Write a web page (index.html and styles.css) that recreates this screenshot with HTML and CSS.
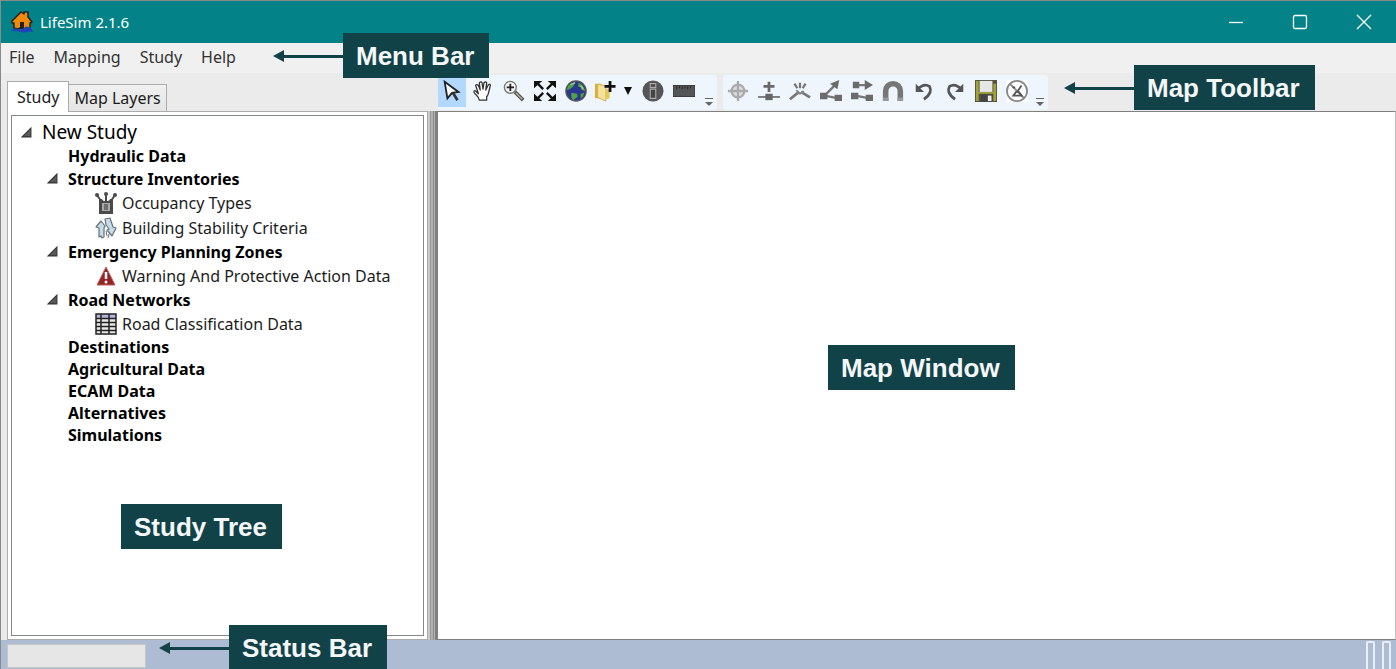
FILE: index.html
```html
<!DOCTYPE html>
<html lang="en">
<head>
<meta charset="utf-8">
<title>LifeSim 2.1.6</title>
<link rel="stylesheet" href="styles.css">
</head>
<body>
<div class="window">
  <header class="titlebar">
    <svg class="logo" viewBox="0 0 24 24"><path d="M2 11 11 2l3 2V2h4v5l4 5-2 1v6l-4-1-2 1-4-1-2 1-4-1v-5H2z" fill="#f08a0c" stroke="#222" stroke-width="1.500" stroke-linejoin="round"/><path d="M10 12h4v6h-4z" fill="#222"/><path d="M1 21q3-4 7-2t6-1 7 0l2 4q-4-1-6 0t-6 0-10-1z" fill="#1d45b8"/></svg>
    <h1 class="title">LifeSim 2.1.6</h1>
    <div class="captions">
      <button class="caption" aria-label="Minimize"><svg viewBox="0 0 16 16"><path d="M1 8.500h14"/></svg></button>
      <button class="caption" aria-label="Maximize"><svg viewBox="0 0 16 16"><rect x="1.500" y="1.500" width="13" height="13" rx="1.500"/></svg></button>
      <button class="caption" aria-label="Close"><svg viewBox="0 0 16 16"><path d="m1 1 14 14M15 1 1 15"/></svg></button>
    </div>
  </header>

  <nav class="menubar">
    <button class="menu">File</button>
    <button class="menu">Mapping</button>
    <button class="menu">Study</button>
    <button class="menu">Help</button>
  </nav>

  <main class="workspace">
    <section class="sidebar">
      <div class="tabs" role="tablist">
        <button class="tab tab-active" role="tab" aria-selected="true">Study</button>
        <button class="tab" role="tab" aria-selected="false">Map Layers</button>
      </div>
      <div class="tab-panel">
        <ul class="tree">
          <li>
            <div class="row row-root"><button class="toggle" aria-label="Collapse New Study"><svg viewBox="0 0 10 10"><path d="M9 1v8H1z"/></svg></button><span>New Study</span></div>
            <ul class="branch">
              <li class="row row-heading"><span class="toggle"></span><span>Hydraulic Data</span></li>
              <li>
                <div class="row row-group"><button class="toggle" aria-label="Collapse Structure Inventories"><svg viewBox="0 0 10 10"><path d="M9 1v8H1z"/></svg></button><span>Structure Inventories</span></div>
                <ul class="leaves">
                  <li class="row row-leaf"><svg class="leaf-icon" viewBox="0 0 22 22"><g stroke="#4a4a4a" stroke-width="2" fill="none"><path d="m2 3 4 6 3 1M20 3l-4 6-3 1M11 2v8"/></g><g fill="#4a4a4a"><circle cx="2" cy="3" r="2"/><circle cx="11" cy="2" r="2"/><circle cx="20" cy="3" r="2"/><path d="M4 7h3l1 2h6l1-2h3v15H4z"/></g><path d="M7 11h8v8H7z" fill="#aaa"/><path d="M9 13h4M9 15h4M9 17h4" stroke="#333"/></svg><span>Occupancy Types</span></li>
                  <li class="row row-leaf"><svg class="leaf-icon" viewBox="0 0 22 22"><g fill="#c4dce6" stroke="#687078" stroke-width="1.200" stroke-linejoin="round"><path d="m1 10 5-6 4 5-1 2v9l-2 1-1-2-2 1V11z"/><path d="m10 2 5-1 3 9 3 1-4 8-5-6 2-1-3-4z"/></g><path d="m11 14 1 5m2-2-1 4" stroke="#687078" fill="none"/></svg><span>Building Stability Criteria</span></li>
                </ul>
              </li>
              <li>
                <div class="row row-group"><button class="toggle" aria-label="Collapse Emergency Planning Zones"><svg viewBox="0 0 10 10"><path d="M9 1v8H1z"/></svg></button><span>Emergency Planning Zones</span></div>
                <ul class="leaves">
                  <li class="row row-leaf"><svg class="leaf-icon" viewBox="0 0 22 22"><path d="m11 2 9 18H2z" fill="#962424" stroke="#b86060" stroke-linejoin="round"/><path d="M11 7v7" stroke="#fff" stroke-width="2.500"/><circle cx="11" cy="17" r="1.500" fill="#fff"/></svg><span>Warning And Protective Action Data</span></li>
                </ul>
              </li>
              <li>
                <div class="row row-group"><button class="toggle" aria-label="Collapse Road Networks"><svg viewBox="0 0 10 10"><path d="M9 1v8H1z"/></svg></button><span>Road Networks</span></div>
                <ul class="leaves">
                  <li class="row row-leaf"><svg class="leaf-icon" viewBox="0 0 22 22"><path d="M1 1h20v20H1z" fill="#e8e8e8"/><path d="M1 1h20v4H1z" fill="#b4b4dc"/><path d="M1 1h20v20H1zM6 1v20M14 1v20M1 5.500h20M1 9.500h20M1 13.500h20M1 17.500h20" fill="none" stroke="#222" stroke-width="1.500"/></svg><span>Road Classification Data</span></li>
                </ul>
              </li>
              <li class="row row-heading"><span class="toggle"></span><span>Destinations</span></li>
              <li class="row row-heading"><span class="toggle"></span><span>Agricultural Data</span></li>
              <li class="row row-heading"><span class="toggle"></span><span>ECAM Data</span></li>
              <li class="row row-heading"><span class="toggle"></span><span>Alternatives</span></li>
              <li class="row row-heading"><span class="toggle"></span><span>Simulations</span></li>
            </ul>
          </li>
        </ul>
      </div>
    </section>
    <div class="splitter"></div>
    <section class="map-area">
      <div class="toolbars">
        <div class="toolbar toolbar-view" role="toolbar" aria-label="Map tools">
          <button class="tool tool-active" aria-label="Select"><svg viewBox="0 0 24 24"><path d="m4 2 15 11-7 1-5 6z" fill="#fff" stroke="#222" stroke-width="2"/><path d="m13 14 5 8" stroke="#333" stroke-width="3"/></svg></button>
          <button class="tool" aria-label="Pan"><svg viewBox="0 0 24 24"><path d="M8 22c0-4-5-6-6-9q0-2 2-1l3 3-3-9q1-2 3 0l2 5-1-8q2-2 3 0l1 7 1-7q2-2 3 0l-1 8 3-6q2-1 2 1l-2 8q-1 4-2 4v4z" fill="#fff" stroke="#333" stroke-width="1.400" stroke-linejoin="round"/></svg></button>
          <button class="tool" aria-label="Zoom in"><svg viewBox="0 0 24 24"><path d="m13 13 9 9" stroke="#555" stroke-width="4"/><path d="m14 14 7 7" stroke="#b8ad8a" stroke-width="1.500"/><circle cx="8" cy="8" r="6.500" fill="#f8f8f8" stroke="#777" stroke-width="1.500"/><path d="M8 4v8M4 8h8" stroke="#222" stroke-width="2"/></svg></button>
          <button class="tool" aria-label="Zoom to full extent"><svg viewBox="0 0 24 24"><path d="m4 4 6 6M20 4l-6 6M4 20l6-6M20 20l-6-6" stroke="#111" stroke-width="2.500"/><path d="M0 1h9L0 9zM24 1v8l-9-8zM0 23v-8l9 8zM24 23h-9l9-8z" fill="#111"/></svg></button>
          <button class="tool" aria-label="Web map"><svg viewBox="0 0 24 24"><circle cx="12" cy="12" r="11" fill="#2c3592" stroke="#555" stroke-width="1.500"/><path d="M3 7q3-4 8-4l-2 4-4 3-3 1zM15 3q6 3 7 9l-4-1-1-3-3-1zM7 14l6 1 1 3-5 4q-3-2-2-8zM17 15l4-1q-1 5-4 6z" fill="#4fa244"/><path d="m6 5 5-2M17 6l3 4" stroke="#9bcf85" stroke-width="1.500"/></svg></button>
          <button class="tool tool-add" aria-label="Add layer"><svg viewBox="0 0 24 24"><path d="M1 4h7l1 16H1z" fill="#d6b23b"/><path d="m4 5 9 1v17l-9-4z" fill="#f5e39a" stroke="#d0b050"/><path d="M13 10h4v10l-4 1z" fill="#e5c757"/><path d="M17.500 1v12M11.500 7h12" stroke="#111" stroke-width="3"/></svg></button>
          <button class="tool tool-drop" aria-label="Add layer options"><svg class="drop" viewBox="0 0 10 8"><path d="M1 0h8L5 8z" fill="#111"/></svg></button>
          <button class="tool" aria-label="Identify"><svg viewBox="0 0 24 24"><circle cx="12" cy="12" r="11.500" fill="#555"/><path d="M9 4h6v4H9zM9 10h6v10H9z" fill="#444" stroke="#aaa" stroke-width="1.200"/></svg></button>
          <button class="tool" aria-label="Measure"><svg viewBox="0 0 24 24"><path d="M0 6h24v12H0z" fill="#555" stroke="#333"/><path d="M4 7v3M7 7v2M10 7v3M13 7v2M16 7v3M19 7v2" stroke="#222"/></svg></button>
          <button class="overflow" aria-label="More map tools"><svg viewBox="0 0 8 10"><path d="M0 1.500h8" stroke="#666"/><path d="M0 5h8L4 9z" fill="#666"/></svg></button>
        </div>
        <div class="toolbar toolbar-edit" role="toolbar" aria-label="Editing tools">
          <button class="tool" aria-label="Add point"><svg viewBox="0 0 24 24"><circle cx="12" cy="12" r="7" fill="#ddd" stroke="#aaa" stroke-width="2.500"/><path d="M12 1v22M1 12h22" stroke="#aaa" stroke-width="2.500"/></svg></button>
          <button class="tool" aria-label="Insert vertex"><svg viewBox="0 0 24 24"><path d="M12 2v11M6 7h12" stroke="#696969" stroke-width="3"/><path d="M0 18.500h24" stroke="#777" stroke-width="2"/><path d="M8 15h8v7H8z" fill="#666"/></svg></button>
          <button class="tool" aria-label="Split"><svg viewBox="0 0 24 24"><path d="m6 4 3 5M12 3v6M18 4l-3 5" stroke="#777" stroke-width="2.500"/><path d="m1 21 10-8M23 19l-10-6" stroke="#777" stroke-width="3"/><path d="m8 11 4 4 4-3" stroke="#888" fill="none" stroke-width="2"/></svg></button>
          <button class="tool" aria-label="Move vertex"><svg viewBox="0 0 24 24"><path d="M5 17 18 4M5 17l15 3" stroke="#777" stroke-width="2.500"/><path d="m21 0-2 10-8-6zM0 14h8v7H0zM16 16h8v7h-8z" fill="#6b6b6b"/></svg></button>
          <button class="tool" aria-label="Move feature"><svg viewBox="0 0 24 24"><path d="M3 5.500h15M5 17l15 3" stroke="#777" stroke-width="2.500"/><path d="M2 2h7v7H2zM15 0l9 5.500-9 5.500zM0 14h8v7H0zM16 16h8v7h-8z" fill="#6b6b6b"/></svg></button>
          <button class="tool" aria-label="Snapping"><svg viewBox="0 0 24 24"><path d="M4 23V12a8 8 0 0 1 16 0v11" fill="none" stroke="#777" stroke-width="6"/><path d="M1 21h6M17 21h6" stroke="#999" stroke-width="4"/></svg></button>
          <button class="tool" aria-label="Undo"><svg viewBox="0 0 24 24"><path d="M5 10q7-7 13-3 4 7-6 14" fill="none" stroke="#555" stroke-width="3"/><path d="M3 4v9h9z" fill="#555"/></svg></button>
          <button class="tool" aria-label="Redo"><svg viewBox="0 0 24 24"><path d="M19 10Q12 3 6 7q-4 7 6 14" fill="none" stroke="#555" stroke-width="3"/><path d="M21 4v9h-9z" fill="#555"/></svg></button>
          <button class="tool" aria-label="Save"><svg viewBox="0 0 24 24"><path d="M0 0h24v24H0z" fill="#55543d"/><path d="M1 1h3v22H1zM20 4h3v19h-3zM4 13h16v2H4z" fill="#a2a23a"/><path d="M5 1h14v12H5z" fill="#e6e6e6"/><path d="M6 16h13v8H6z" fill="#444"/><path d="M14 17h4v6h-4z" fill="#eee"/></svg></button>
          <button class="tool" aria-label="Discard edits"><svg viewBox="0 0 24 24"><path d="M0 0h24v24H0z" fill="#fff"/><circle cx="12" cy="12" r="11" fill="none" stroke="#888" stroke-width="2"/><path d="m4 4 16 16" stroke="#888" stroke-width="2"/><path d="m17 6-5 7M7 8h3M8 17l3-4h3l3 4z" stroke="#555" stroke-width="2" fill="none"/></svg></button>
          <button class="overflow" aria-label="More editing tools"><svg viewBox="0 0 8 10"><path d="M0 1.500h8" stroke="#666"/><path d="M0 5h8L4 9z" fill="#666"/></svg></button>
        </div>
      </div>
      <div class="map-view"></div>
    </section>
  </main>

  <footer class="statusbar">
    <div class="status-panel"></div>
    <div class="grips"><span class="grip"></span><span class="grip"></span></div>
  </footer>

  <div class="callout callout-menu"><svg class="arrow" viewBox="0 0 70 12"><path d="M0 6 11 0v12z"/><path d="M9 5h61v3H9z"/></svg><span class="callout-label">Menu Bar</span></div>
  <div class="callout callout-toolbar"><svg class="arrow" viewBox="0 0 70 12"><path d="M0 6 11 0v12z"/><path d="M9 5h61v3H9z"/></svg><span class="callout-label">Map Toolbar</span></div>
  <div class="callout callout-map"><span class="callout-label">Map Window</span></div>
  <div class="callout callout-tree"><span class="callout-label">Study Tree</span></div>
  <div class="callout callout-status"><svg class="arrow" viewBox="0 0 70 12"><path d="M0 6 11 0v12z"/><path d="M9 5h61v3H9z"/></svg><span class="callout-label">Status Bar</span></div>
</div>
</body>
</html>
```
FILE: styles.css
```css
* { box-sizing: border-box; }

body {
  margin: 0;
  font-family: "Noto Sans", "Open Sans", sans-serif;
  font-size: 16px;
  color: #1c1c1c;
}

button {
  margin: 0;
  padding: 0;
  border: 0;
  background: none;
  font: inherit;
  color: inherit;
}

svg { display: block; }

ul { list-style: none; margin: 0; padding: 0; }

.window {
  position: relative;
  display: flex;
  flex-direction: column;
  height: 100vh;
  overflow: hidden;
  background: #ebebeb;
  border-top: 1px solid #8a8a8a;
  border-left: 1px solid #8a8a8a;
}

.titlebar {
  display: flex;
  align-items: center;
  height: 42px;
  padding-left: 9px;
  background: #038387;
  color: #fff;
}
.logo { width: 24px; height: 24px; }
.title {
  margin: 0 0 0 6px;
  font-size: 15px;
  line-height: 20px;
  font-weight: 400;
}
.captions { display: flex; margin-left: auto; }
.caption {
  display: grid;
  place-items: center;
  width: 64px;
  height: 40px;
}
.caption svg {
  width: 16px;
  height: 16px;
  fill: none;
  stroke: #fff;
  stroke-width: 1.3;
}

.menubar {
  display: flex;
  gap: 19px;
  height: 30px;
  padding: 0 8px;
  background: #f0f0f0;
}
.menu { height: 28px; line-height: 26px; color: #333; }

.workspace { display: flex; flex: 1; min-height: 0; }

.sidebar {
  display: flex;
  flex-direction: column;
  width: 427px;
  padding: 8px 0 0 6px;
}
.tabs { display: flex; align-items: flex-end; height: 31px; }
.tab {
  height: 28px;
  padding: 0 5px;
  border: 1px solid #acacac;
  border-left: 0;
  background: linear-gradient(#f0f0f0, #e5e5e5);
}
.tab-active {
  z-index: 1;
  height: 31px;
  padding: 0 9px;
  border-left: 1px solid #acacac;
  border-bottom: 0;
  background: #fff;
}
.tab-panel {
  flex: 1;
  display: flex;
  padding: 3px;
  margin-top: -1px;
  border: 1px solid #acacac;
  background: #fff;
}
.tree {
  flex: 1;
  padding: 3px 8px;
  border: 1px solid #828790;
}
.branch { padding-left: 26px; }
.leaves { padding-left: 48px; }
.row { display: flex; align-items: center; white-space: nowrap; }
.row-root { height: 26px; font-size: 19px; color: #000; }
.row-heading { height: 22px; font-weight: 700; color: #000; }
.row-group { height: 23px; font-weight: 700; color: #000; }
.row-leaf { height: 25px; }
.toggle { width: 22px; padding-left: 1px; }
.toggle svg { width: 11px; height: 11px; fill: #595959; stroke: #333; }
.leaf-icon { width: 22px; height: 22px; margin: 0 5px 0 1px; }

.splitter {
  width: 9px;
  margin-top: 38px;
  background: linear-gradient(90deg, #c8c8c8 0 2px, #999 2px 3px, #b0b0b0 3px 5px, #8c8c8c 5px 6px, #b4b4b4 6px 7px, #808080 7px);
}

.map-area { flex: 1; display: flex; flex-direction: column; min-width: 0; }
.toolbars { display: flex; gap: 6px; height: 38px; padding: 2px 0 1px 1px; }
.toolbar {
  display: flex;
  border-radius: 3px;
  background: #eef5fd;
}
.toolbar-view { gap: 3px; width: 279px; }
.toolbar-edit { justify-content: space-between; width: 325px; padding: 0 2px 0 1px; }
.tool {
  display: grid;
  place-items: center;
  width: 28px;
  height: 32px;
}
.tool svg { width: 22px; height: 22px; }
.tool-active { background: #b3d8ff; }
.tool-add { width: 24px; }
.tool-drop { width: 16px; }
.tool .drop { width: 10px; height: 8px; }
.overflow { align-self: flex-end; width: 12px; height: 16px; }
.toolbar-view .overflow { margin-left: auto; margin-right: 2px; }
.overflow svg { width: 8px; height: 10px; margin: 0 auto; }
.map-view {
  flex: 1;
  border: 1px solid #808080;
  border-right-color: #c0c0c0;
  background: #fff;
}

.statusbar {
  display: flex;
  justify-content: space-between;
  height: 29px;
  padding: 4px 5px 1px 6px;
  background: #adbbd3;
}
.status-panel { width: 139px; border: 1px solid #c6c6c6; background: #e6e6e6; }
.grips { display: flex; gap: 7px; margin: -3px 0 -4px; }
.grip { width: 9px; border: 2px solid #e8eef8; border-bottom: 0; border-radius: 2px; }

.callout {
  position: absolute;
  display: flex;
  align-items: center;
}
.callout-label {
  padding: 1px 15px 0 13px;
  background: #114247;
  color: #f4f6f8;
  font: 700 26px/44px "Liberation Sans", Arial, sans-serif;
  white-space: nowrap;
}
.arrow { width: 70px; height: 12px; fill: #114247; }
.callout-menu { left: 272px; top: 32px; }
.callout-toolbar { left: 1063px; top: 64px; }
.callout-map { left: 827px; top: 344px; }
.callout-tree { left: 120px; top: 503px; }
.callout-status { left: 158px; top: 624px; }
```
